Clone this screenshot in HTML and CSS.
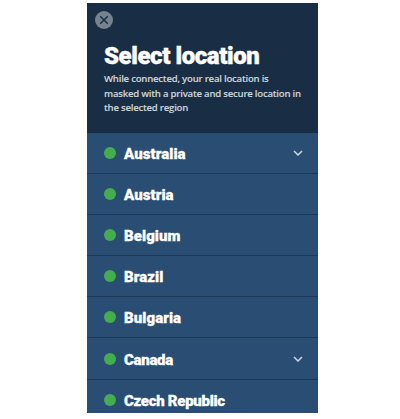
FILE: index.html
```html
<!DOCTYPE html>
<html lang="en">
<head>
<meta charset="utf-8">
<title>Select location</title>
<link rel="stylesheet" href="styles.css">
</head>
<body>
<main class="panel">
  <header class="header">
    <svg class="close" viewBox="0 0 18 18"><circle cx="9" cy="9" r="9"/><path d="M5.2 5.2l7.6 7.6M12.8 5.2l-7.6 7.6"/></svg>
    <h1 class="title">Select location</h1>
    <p class="intro">While connected, your real location is<br>masked with a private and secure location in<br>the selected region</p>
  </header>
  <ul class="list">
    <li class="row"><i class="dot"></i><span class="name">Australia</span><svg class="chevron" viewBox="0 0 10 6"><path d="M1 1l4 4 4-4"/></svg></li>
    <li class="row"><i class="dot"></i><span class="name">Austria</span></li>
    <li class="row"><i class="dot"></i><span class="name">Belgium</span></li>
    <li class="row"><i class="dot"></i><span class="name">Brazil</span></li>
    <li class="row"><i class="dot"></i><span class="name">Bulgaria</span></li>
    <li class="row"><i class="dot"></i><span class="name name-tight">Canada</span><svg class="chevron" viewBox="0 0 10 6"><path d="M1 1l4 4 4-4"/></svg></li>
    <li class="row"><i class="dot"></i><span class="name name-tight">Czech Republic</span></li>
  </ul>
</main>
</body>
</html>
```
FILE: styles.css
```css
* { box-sizing: border-box; }
body { display: flow-root; margin: 0; height: 419px; background: #fff; overflow: hidden; }
.panel { width: 231px; height: 410px; margin: 3px 0 0 87px; overflow: hidden; background: #294d73; }
.header { height: 130px; padding: 8px 0 0 17px; background: #192e45; border-bottom: 1px solid #152b43; }
.close { display: block; width: 18px; height: 18px; margin-left: -9px; }
.close circle { fill: #75828f; }
.close path { stroke: #192e45; stroke-width: 1.5; fill: none; }
.title { margin: 13px 0 0; font: 900 24px/28px Roboto, sans-serif; letter-spacing: -0.42px; color: #fff; -webkit-text-stroke: 0.4px #fff; white-space: nowrap; }
.intro { margin: 2px 0 0; font: 600 9.6px/14.5px "Open Sans", sans-serif; letter-spacing: -0.23px; color: #ced5dc; -webkit-text-stroke: 0.1px #ced5dc; white-space: nowrap; }
.list { margin: 0; padding: 0; list-style: none; }
.row { display: flex; align-items: center; height: 41.1px; padding: 0 15px 0 17px; border-bottom: 1px solid #1d3856; }
.dot { width: 12px; height: 12px; border-radius: 50%; background: #44ad4d; }
.name { margin-left: 8px; padding-top: 1px; font: 900 15px/20px Roboto, sans-serif; letter-spacing: 0.06px; color: #fff; -webkit-text-stroke: 0.3px #fff; white-space: nowrap; }
.name-tight { padding-top: 2px; letter-spacing: -0.3px; }
.chevron { width: 10px; height: 6px; margin-left: auto; }
.chevron path { fill: none; stroke: #cdd7e2; stroke-width: 1.5; }
```
